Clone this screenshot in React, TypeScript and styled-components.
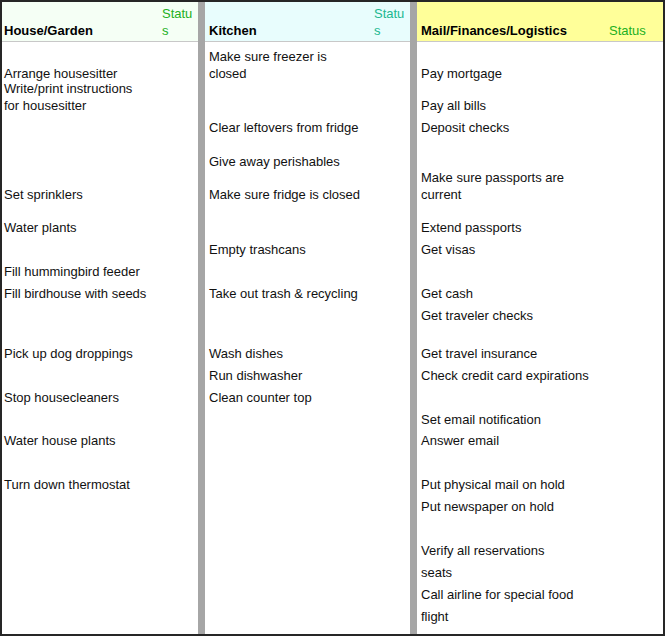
import React from "react";
import styled, { createGlobalStyle } from "styled-components";

const Global = createGlobalStyle`
  html, body { margin: 0; padding: 0; background: #262626; }
  body { font-family: Arial, "Liberation Sans", sans-serif; }
`;

const Sheet = styled.div`
  width: 661px; height: 632px; margin: 2px; background: #fff;
  display: flex; overflow: hidden;
`;
const Col = styled.div<{ w: number; pad: number }>`
  width: ${p => p.w}px; display: flex; flex-direction: column;
  --pad: ${p => p.pad}px;
`;
const Sep = styled.div`
  width: 7px; background: #a6a6a6;
`;
const Header = styled.div<{ bg: string }>`
  height: 37px; background: ${p => p.bg}; border-bottom: 1px solid #c8c8c8;
  display: flex; align-items: flex-end; justify-content: space-between;
  padding: 0 0 2px var(--pad); box-sizing: content-box;
`;
const Title = styled.div`
  font-weight: bold; font-size: 13px; color: #000; line-height: 16px;
`;
const Status = styled.div<{ c: string; w: number }>`
  color: ${p => p.c}; font-size: 13px; line-height: 17px; width: ${p => p.w}px;
  flex-shrink: 0; word-break: break-all;
`;
const Body = styled.div`
  display: flex; flex-direction: column; padding-left: var(--pad);
`;
const Item = styled.div`
  font-size: 13px; line-height: 17px; color: #111; white-space: pre-line;
`;

type It = [number, string];
const c1: It[] = [[73,"Arrange housesitter"],[88,"Write/print instructions\nfor housesitter"],[194,"Set sprinklers"],[227,"Water plants"],[271,"Fill hummingbird feeder"],[293,"Fill birdhouse with seeds"],[353,"Pick up dog droppings"],[397,"Stop housecleaners"],[440,"Water house plants"],[484,"Turn down thermostat"]];
const c2: It[] = [[56,"Make sure freezer is\nclosed"],[127,"Clear leftovers from fridge"],[161,"Give away perishables"],[194,"Make sure fridge is closed"],[249,"Empty trashcans"],[293,"Take out trash & recycling"],[353,"Wash dishes"],[375,"Run dishwasher"],[397,"Clean counter top"]];
const c3: It[] = [[73,"Pay mortgage"],[105,"Pay all bills"],[127,"Deposit checks"],[177,"Make sure passports are\ncurrent"],[227,"Extend passports"],[249,"Get visas"],[293,"Get cash"],[315,"Get traveler checks"],[353,"Get travel insurance"],[375,"Check credit card expirations"],[419,"Set email notification"],[440,"Answer email"],[484,"Put physical mail on hold"],[506,"Put newspaper on hold"],[550,"Verify all reservations"],[572,"seats"],[594,"Call airline for special food"],[616,"flight"]];

function List({ items }: { items: It[] }) {
  let y = 42;
  return (
    <Body>
      {items.map(([cy, t]) => {
        const top = cy - 8.5;
        const m = top - y;
        y = top + 17 * t.split("\n").length;
        return <Item key={t} style={{ marginTop: m }}>{t}</Item>;
      })}
    </Body>
  );
}

export default function App() {
  return (
    <>
      <Global />
      <Sheet>
        <Col w={196} pad={2}>
          <Header bg="#f5fff5">
            <Title>House/Garden</Title>
            <Status c="#22b022" w={36}>Status</Status>
          </Header>
          <List items={c1} />
        </Col>
        <Sep />
        <Col w={205} pad={4}>
          <Header bg="#e8fdfd">
            <Title>Kitchen</Title>
            <Status c="#20b890" w={36}>Status</Status>
          </Header>
          <List items={c2} />
        </Col>
        <Sep />
        <Col w={246} pad={4}>
          <Header bg="#ffff99">
            <Title>Mail/Finances/Logistics</Title>
            <Status c="#22b022" w={54}>Status</Status>
          </Header>
          <List items={c3} />
        </Col>
      </Sheet>
    </>
  );
}
